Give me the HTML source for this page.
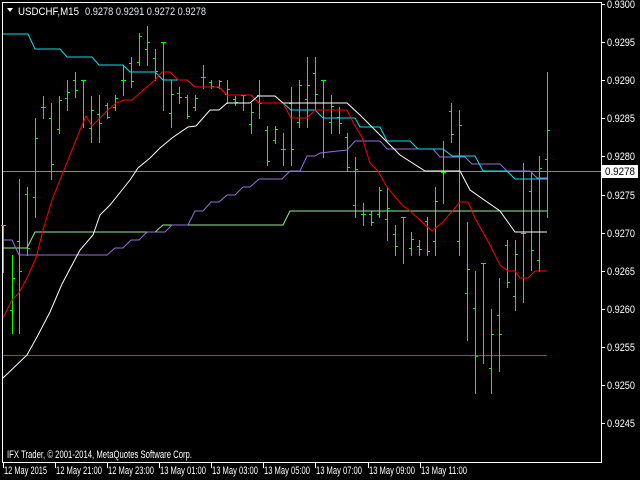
<!DOCTYPE html>
<html><head><meta charset="utf-8"><style>
html,body{margin:0;padding:0;background:#000;width:640px;height:480px;overflow:hidden}
svg{display:block;font-family:"Liberation Sans",sans-serif}
</style></head><body>
<svg id="c" width="640" height="480" xmlns="http://www.w3.org/2000/svg">
<rect width="640" height="480" fill="#000"/>
<rect x="2.5" y="2.5" width="599" height="460" fill="none" stroke="#fff" stroke-width="1" shape-rendering="crispEdges"/>
<rect x="3" y="171" width="598" height="1" fill="#8a8a8a"/>
<rect x="3" y="355" width="544" height="1" fill="#1c8a1c"/>
<g id="bars" fill="#00ff00" shape-rendering="crispEdges"></g>
<g fill="none" stroke-width="1">
<polyline stroke="#90ee90" points="3,248 27,248 35,232 155,232 163,225 283,225 290,211 547,211"/>
<polyline stroke="#9370db" points="3,240 12,240 19,255 107,255 115,248 123,248 131,240 139,240 147,232 165,232 172,225 188,225 195,211 203,211 211,202 219,202 227,195 235,195 243,187 250,187 259,179 282,179 290,171 300,171 307,156 315,156 320,153 347,150 355,141 380,141 387,149 433,149 440,157 465,157 472,164 500,164 507,171 530,171 537,178 547,178"/>
<polyline stroke="#00e5ee" points="3,34 28,34 35,49 60,49 67,57 92,57 99,65 123,65 130,72 155,72 163,80 187,80 195,87 219,87 227,95 251,95 259,103 283,103 291,110 315,110 323,118 355,118 360,127 380,127 387,141 410,141 418,149 443,149 452,156 475,156 483,171 507,171 515,179 547,179"/>
<polyline stroke="#ff0000" points="3,318 12,300 19,293 28,276 36,258 43,230 52,200 60,180 70,155 80,130 86,116 92,126 100,118 108,110 116,103 124,100 132,100 140,93 155,80 162,72 170,72 178,80 187,80 195,87 219,87 227,95 243,95 251,95 259,103 283,103 291,118 307,118 315,110 347,110 355,126 362,137 370,163 378,171 387,187 402,205 410,211 432,231 443,222 460,202 468,202 475,218 490,245 500,265 508,271 515,271 520,278 528,278 535,271 547,271"/>
<polyline stroke="#ffffff" points="3,378 27,355 37,337 50,312 62,284 80,250 93,235 100,215 110,205 122,190 130,180 138,168 150,158 160,148 172,138 188,127 196,126 210,110 219,110 227,103 250,103 258,96 275,96 283,103 347,103 360,115 370,125 380,135 400,155 425,171 460,171 470,190 500,211 515,232 547,232"/>
</g>
<polygon points="7,8 13,8 10,12" fill="#fff"/>
<text x="18" y="15" font-size="11" fill="#fff" textLength="61" lengthAdjust="spacingAndGlyphs">USDCHF,M15</text>
<text x="85" y="15" font-size="11" fill="#dfe8f0" textLength="121" lengthAdjust="spacingAndGlyphs">0.9278 0.9291 0.9272 0.9278</text>
<g id="ax" font-size="11" fill="#fff"></g>
<rect x="602" y="165" width="36" height="13" fill="#fff"/>
<text x="605" y="175" font-size="11" fill="#000" textLength="30" lengthAdjust="spacingAndGlyphs">0.9278</text>
<text x="7" y="458" font-size="11" fill="#fff" textLength="185" lengthAdjust="spacingAndGlyphs">IFX Trader, © 2001-2014, MetaQuotes Software Corp.</text>
<g id="tx" font-size="11" fill="#fff"></g>
</svg>
<script>
var NS="http://www.w3.org/2000/svg";
function el(p,t,a,txt){var e=document.createElementNS(NS,t);for(var k in a)e.setAttribute(k,a[k]);if(txt)e.textContent=txt;p.appendChild(e);return e;}
var bars=[[3,225,272],[12,255,333],[19,179,333],[27,187,255],[35,118,217],[43,96,118],[51,103,179],[59,96,133],[67,80,110],[75,72,97],[83,80,127],[91,96,142],[99,95,142],[107,103,118],[115,95,110],[123,65,95],[131,57,87],[139,33,65],[147,26,65],[155,49,80],[163,42,110],[171,80,127],[179,87,103],[187,95,118],[195,95,110],[203,65,88],[211,80,88],[219,80,88],[227,80,103],[235,96,105],[243,95,110],[251,103,133],[259,80,118],[267,126,165],[275,126,143],[283,133,165],[291,87,165],[299,80,127],[307,57,127],[315,57,110],[323,80,157],[331,95,133],[339,107,133],[347,133,171],[355,157,217],[363,203,225],[371,211,225],[379,187,217],[387,187,240],[395,225,255],[403,217,263],[411,232,255],[419,240,255],[427,217,255],[435,187,255],[443,141,203],[451,103,142],[459,110,255],[467,222,340],[475,271,393],[483,263,363],[491,309,393],[499,278,371],[507,240,287],[515,240,310],[523,163,302],[531,171,270],[539,156,271],[547,72,217]];
var g=document.getElementById("bars");
bars.forEach(function(b,i){var x=b[0],h=b[1],l=b[2];
el(g,"rect",{x:x,y:h,width:1,height:l-h+1});
var o=Math.round(h+(l-h)*((i*37%10)/10)),c=Math.round(h+(l-h)*((i*53%10)/10));
el(g,"rect",{x:x-2,y:o,width:2,height:1});
el(g,"rect",{x:x+1,y:c,width:2,height:1});});
var ax=document.getElementById("ax");
var labs=["0.9300","0.9295","0.9290","0.9285","0.9280","0.9275","0.9270","0.9265","0.9260","0.9255","0.9250","0.9245"];
labs.forEach(function(t,i){var y=Math.round(4+i*38.1);
el(ax,"rect",{x:601,y:y,width:4,height:1});
el(ax,"text",{x:607,y:y+4,textLength:28,lengthAdjust:"spacingAndGlyphs"},t);});
var tx=document.getElementById("tx");
var tl=["12 May 2015","12 May 21:00","12 May 23:00","13 May 01:00","13 May 03:00","13 May 05:00","13 May 07:00","13 May 09:00","13 May 11:00"];
tl.forEach(function(t,i){var x=[3,55,107,159,211,263,315,368,420][i];
el(tx,"rect",{x:x,y:463,width:1,height:5});
el(tx,"text",{x:x+1,y:474,textLength:i==0?43:46,lengthAdjust:"spacingAndGlyphs"},t);});
</script>
</body></html>
